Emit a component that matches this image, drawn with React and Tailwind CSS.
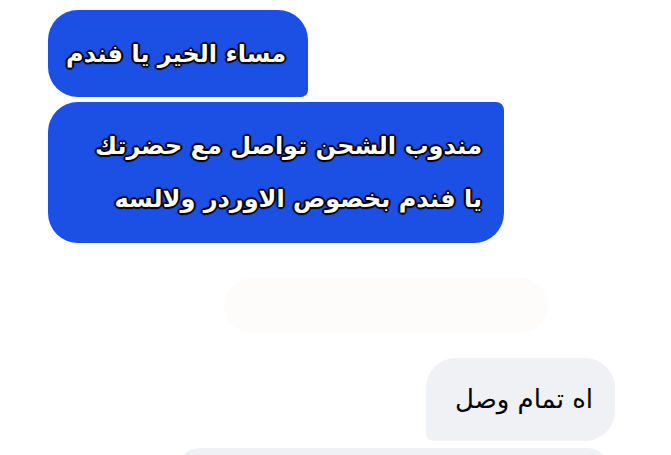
import React from 'react';

const outline =
  '[text-shadow:1px_1px_0_#000,-1px_-1px_0_#000,1px_-1px_0_#000,-1px_1px_0_#000,0_2px_1px_#000,2px_0_1px_#000,0_-2px_1px_#000,-2px_0_1px_#000]';

export default function App() {
  return (
    <div
      dir="ltr"
      className="w-[671px] h-[455px] overflow-hidden bg-white flex flex-col font-['DejaVu_Sans',sans-serif]"
    >
      {/* outgoing blue messages */}
      <div
        dir="rtl"
        className={`shrink-0 ml-[48px] mt-[10px] w-[260px] h-[87px] bg-[#1c4fe3] rounded-[30px] rounded-br-[7px] flex items-center pr-[22px] text-white font-bold text-[24px] ${outline}`}
      >
        مساء الخير يا فندم
      </div>
      <div
        dir="rtl"
        className={`shrink-0 ml-[48px] mt-[5px] w-[456px] h-[141px] bg-[#1c4fe3] rounded-[30px] rounded-tr-[8px] flex flex-col justify-center pr-[22px] text-white font-bold text-[24px] leading-[53px] ${outline}`}
      >
        <div>مندوب الشحن تواصل مع حضرتك</div>
        <div>يا فندم بخصوص الاوردر ولالسه</div>
      </div>

      {/* faded placeholder */}
      <div className="shrink-0 ml-[224px] mt-[35px] w-[324px] h-[55px] rounded-full bg-[#fdfcfa]" />

      {/* incoming gray messages */}
      <div
        dir="rtl"
        className="shrink-0 self-end mr-[56px] mt-[25px] w-[189px] h-[83px] bg-[#f0f1f5] rounded-[30px] rounded-bl-[8px] flex items-center pr-[22px] text-black text-[26px]"
      >
        اه تمام وصل
      </div>
      <div className="shrink-0 self-end mr-[60px] mt-[7px] w-[435px] h-[40px] bg-[#f0f1f5] rounded-t-[24px]" />
    </div>
  );
}
